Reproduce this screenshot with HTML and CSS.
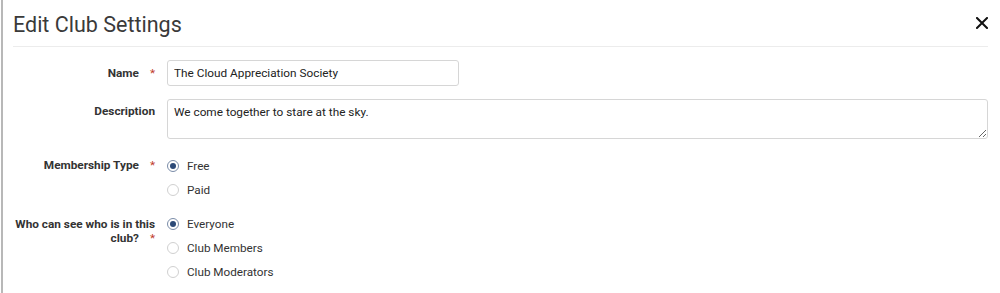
FILE: index.html
```html
<!DOCTYPE html>
<html>
<head>
<meta charset="utf-8">
<link rel="stylesheet" href="styles.css">
</head>
<body>
<div class="modal">
  <div class="header">
    <h1 class="title">Edit Club Settings</h1>
    <button class="close" aria-label="Close">
      <svg width="12" height="12" viewBox="0 0 12 12"><path d="M1 1L11 11M11 1L1 11" stroke="#111" stroke-width="2" stroke-linecap="square"/></svg>
    </button>
  </div>
  <form class="form">
    <div class="row row-name">
      <label class="label">Name<span class="req">*</span></label>
      <div class="field"><input class="input" type="text" value="The Cloud Appreciation Society"></div>
    </div>
    <div class="row row-desc">
      <label class="label">Description</label>
      <div class="field"><textarea class="textarea">We come together to stare at the sky.</textarea></div>
    </div>
    <div class="row row-member">
      <label class="label">Membership Type<span class="req">*</span></label>
      <div class="field radios">
        <div class="opt"><span class="radio checked"></span>Free</div>
        <div class="opt"><span class="radio"></span>Paid</div>
      </div>
    </div>
    <div class="row row-who">
      <label class="label">Who can see who is in this club?<span class="req">*</span></label>
      <div class="field radios">
        <div class="opt"><span class="radio checked"></span>Everyone</div>
        <div class="opt"><span class="radio"></span>Club Members</div>
        <div class="opt"><span class="radio"></span>Club Moderators</div>
      </div>
    </div>
  </form>
</div>
</body>
</html>
```

FILE: styles.css
```css
html, body {
  margin: 0;
  padding: 0;
  background: #fff;
}
body {
  font-family: Roboto, "Liberation Sans", Arial, sans-serif;
  color: #333;
  height: 293px;
  overflow: hidden;
}
.modal {
  margin-left: 1px;
  border-left: 2px solid #b8b8b8;
  height: 293px;
  box-sizing: border-box;
  padding: 0 12px 0 10px;
}
.header {
  display: flex;
  align-items: center;
  justify-content: space-between;
  height: 46px;
  border-bottom: 1px solid #ececec;
}
.title {
  margin: 0;
  font-size: 21.5px;
  font-weight: 400;
  color: #3a3a3a;
  padding-top: 2px;
}
.close {
  border: 0;
  background: none;
  padding: 0;
  width: 12px;
  height: 12px;
  display: flex;
}
.form {
  display: flex;
  flex-direction: column;
  padding-top: 13px;
  margin-left: -12px;
}
.row {
  display: grid;
  grid-template-columns: 154px 1fr;
  column-gap: 12px;
}
.row-desc { margin-top: 13px; }
.row-member { margin-top: 15px; }
.row-who { margin-top: 10px; }
.label {
  text-align: right;
  font-size: 11.8px;
  font-weight: 700;
  line-height: 14px;
  color: #333;
  padding-top: 6px;
}
.row-desc .label { padding-top: 5px; }
.row-member .label { padding-top: 4px; }
.row-who .label { padding-top: 5px; }
.req {
  color: #c0392b;
  font-weight: 400;
  margin-left: 11px;
}
.input {
  display: block;
  width: 292px;
  height: 26px;
  box-sizing: border-box;
  border: 1px solid #d6d6d6;
  border-radius: 3px;
  padding: 0 6px;
  font-family: Roboto, "Liberation Sans", Arial, sans-serif;
  font-size: 11.8px;
  color: #222;
}
.textarea {
  display: block;
  width: 100%;
  height: 40px;
  box-sizing: border-box;
  border: 1px solid #d6d6d6;
  border-radius: 3px;
  padding: 5px 6px;
  font-family: Roboto, "Liberation Sans", Arial, sans-serif;
  font-size: 11.8px;
  line-height: 15px;
  color: #222;
  resize: vertical;
}
.radios {
  display: flex;
  flex-direction: column;
}
.opt {
  display: flex;
  align-items: center;
  height: 24px;
  font-size: 11.7px;
  color: #333;
}
.radio {
  width: 12px;
  height: 12px;
  box-sizing: border-box;
  border: 1px solid #d0d0d0;
  border-radius: 50%;
  margin-right: 8px;
  position: relative;
  background: #fff;
}
.radio.checked {
  border-color: #7a8ca8;
}
.radio.checked::after {
  content: "";
  position: absolute;
  left: 2px;
  top: 2px;
  width: 6px;
  height: 6px;
  border-radius: 50%;
  background: #2c4a78;
}
```
